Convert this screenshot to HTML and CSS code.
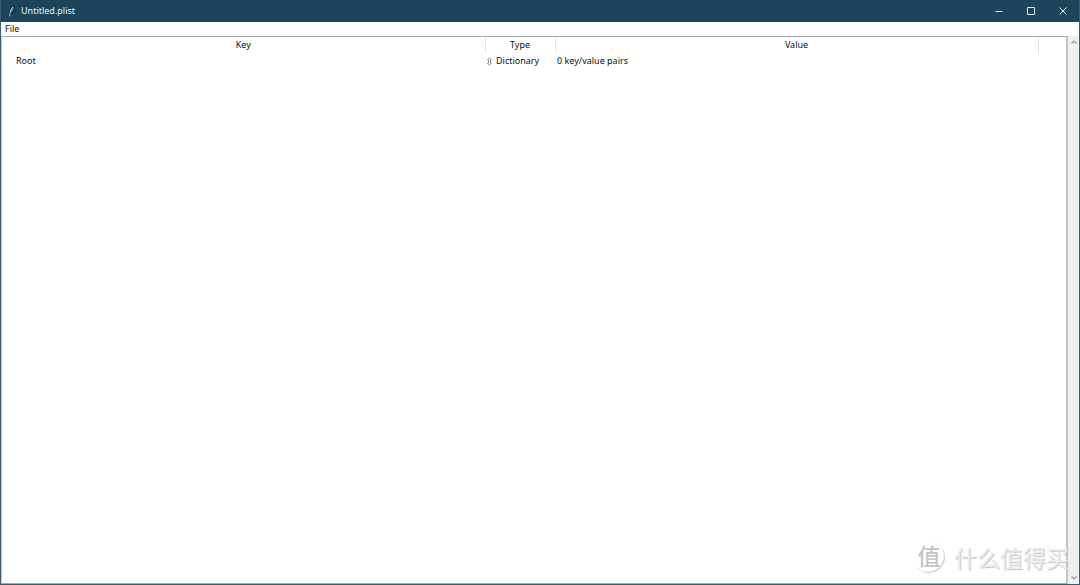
FILE: index.html
```html
<!DOCTYPE html>
<html lang="en">
<head>
<meta charset="utf-8">
<title>Untitled.plist</title>
<link rel="stylesheet" href="styles.css">
</head>
<body>
<div class="window">
  <header class="titlebar">
    <svg class="feather" viewBox="0 0 8 12" aria-hidden="true">
      <path d="M1.500 10.500C.2 6 2.500 1 6.500 .5C7.800 4 6 8.500 2.800 10Z" fill="#0d1a2b"/>
      <path d="M2 8.500C1.600 5.500 3 2.200 5.900 1.200C6.300 4 5 7 2 8.500Z" fill="#4d80b5"/>
      <path d="M1.800 11.500C1.800 8.500 2.200 4.500 4.800 2" fill="none" stroke="#b9cfe2" stroke-width=".9"/>
    </svg>
    <h1 class="title">Untitled.plist</h1>
    <div class="controls">
      <button class="control" aria-label="Minimize"><svg viewBox="0 0 8 8"><path d="M.5 4.500H7.500"/></svg></button>
      <button class="control" aria-label="Maximize"><svg viewBox="0 0 8 8"><path d="M.5 .5H7.500V7.500H.5Z"/></svg></button>
      <button class="control" aria-label="Close"><svg viewBox="0 0 8 8"><path d="M.5 .5L7.500 7.500M7.500 .5L.5 7.500"/></svg></button>
    </div>
  </header>
  <nav class="menubar"><button class="menu">File</button></nav>
  <main class="content">
    <div class="tree">
      <table class="plist">
        <colgroup><col><col class="col-type"><col><col class="col-end"></colgroup>
        <thead>
          <tr><th scope="col">Key</th><th scope="col">Type</th><th scope="col">Value</th><td></td></tr>
        </thead>
        <tbody>
          <tr>
            <td class="key">Root</td>
            <td><button class="type"><svg class="updown" viewBox="0 0 5 9" aria-hidden="true"><path d="M.5 3L2.500 .7L4.500 3H3.500V6H4.500L2.500 8.300L.5 6H1.500V3Z"/></svg>Dictionary</button></td>
            <td class="value">0 key/value pairs</td>
            <td></td>
          </tr>
        </tbody>
      </table>
    </div>
    <div class="scrollbar">
      <button class="scroll" aria-label="Scroll up"><svg viewBox="0 0 6 4"><path d="M.5 3.500L3 1L5.500 3.500"/></svg></button>
      <button class="scroll" aria-label="Scroll down"><svg viewBox="0 0 6 4"><path d="M.5 .5L3 3L5.500 .5"/></svg></button>
    </div>
  </main>
  <div class="watermark" lang="zh-CN"><span class="seal">值</span><span>什么值得买</span></div>
</div>
</body>
</html>
```
FILE: styles.css
```css
* {
  box-sizing: border-box;
}

body {
  margin: 0;
  font: 9px/16px "Noto Sans", "Noto Sans CJK SC", sans-serif;
  color: #111;
}

button {
  font: inherit;
  color: inherit;
  background: none;
  border: 0;
  padding: 0;
}

svg {
  display: block;
}

.window {
  position: relative;
  display: flex;
  flex-direction: column;
  height: 100vh;
  background: #fff;
  border: 1px solid #3d5d72;
  border-top: 0;
}

.titlebar {
  display: flex;
  align-items: center;
  flex: 0 0 22px;
  padding-left: 7px;
  background: #1c445b;
  color: #e8eef1;
}

.feather {
  width: 8px;
  height: 12px;
}

.title {
  flex: 1;
  margin: 0;
  padding-left: 5px;
  font-size: 9px;
  font-weight: 400;
}

.controls {
  display: flex;
  align-self: stretch;
}

.control {
  display: grid;
  place-items: center;
  width: 32px;
  height: 21px;
}

.control svg {
  width: 8px;
  height: 8px;
  fill: none;
  stroke: #e4ebef;
}

.menubar {
  flex: 0 0 14px;
  line-height: 14px;
  padding-left: 4px;
}

.menu {
  display: block;
}

.content {
  display: flex;
  flex: 1;
  min-height: 0;
}

.tree {
  flex: 1;
  border: 1px solid #a3a7b0;
  border-left-color: #c8cbd2;
  border-right: 2px solid #c2c4ca;
}

.plist {
  width: 100%;
  table-layout: fixed;
  border-collapse: collapse;
}

.col-type {
  width: 70px;
}

.col-end {
  width: 28px;
}

.plist th,
.plist td {
  height: 16px;
  padding: 0;
  font-weight: 400;
  text-align: left;
}

.plist th {
  text-align: center;
  border-right: 1px solid #e5e5e5;
}

.plist .key {
  padding-left: 14px;
}

.plist .value {
  padding-left: 2px;
}

.type {
  display: flex;
  align-items: center;
  gap: 4px;
  padding-left: 2px;
}

.updown {
  width: 5px;
  height: 9px;
  fill: #fff;
  stroke: #777;
  stroke-width: .8;
}

.scrollbar {
  display: flex;
  flex-direction: column;
  justify-content: space-between;
  width: 11px;
  background: #f0f0f0;
}

.scroll {
  display: grid;
  place-items: center;
  height: 12px;
}

.scroll svg {
  width: 6px;
  height: 4px;
  fill: none;
  stroke: #999;
  stroke-width: 1.2;
}

.watermark {
  position: absolute;
  right: 10px;
  bottom: 11px;
  display: flex;
  align-items: center;
  gap: 9px;
  font: 23px/32px "Noto Sans CJK SC", sans-serif;
  color: #ececec;
  text-shadow: 1px 1px 1px #c4c4c4;
  pointer-events: none;
}

.seal {
  width: 32px;
  height: 32px;
  border-radius: 50%;
  font-size: 23px;
  line-height: 28px;
  font-weight: 500;
  text-align: center;
  color: #c4c4c4;
  text-shadow: none;
  box-shadow: inset -1px -1px 1px #ccc;
}
```
